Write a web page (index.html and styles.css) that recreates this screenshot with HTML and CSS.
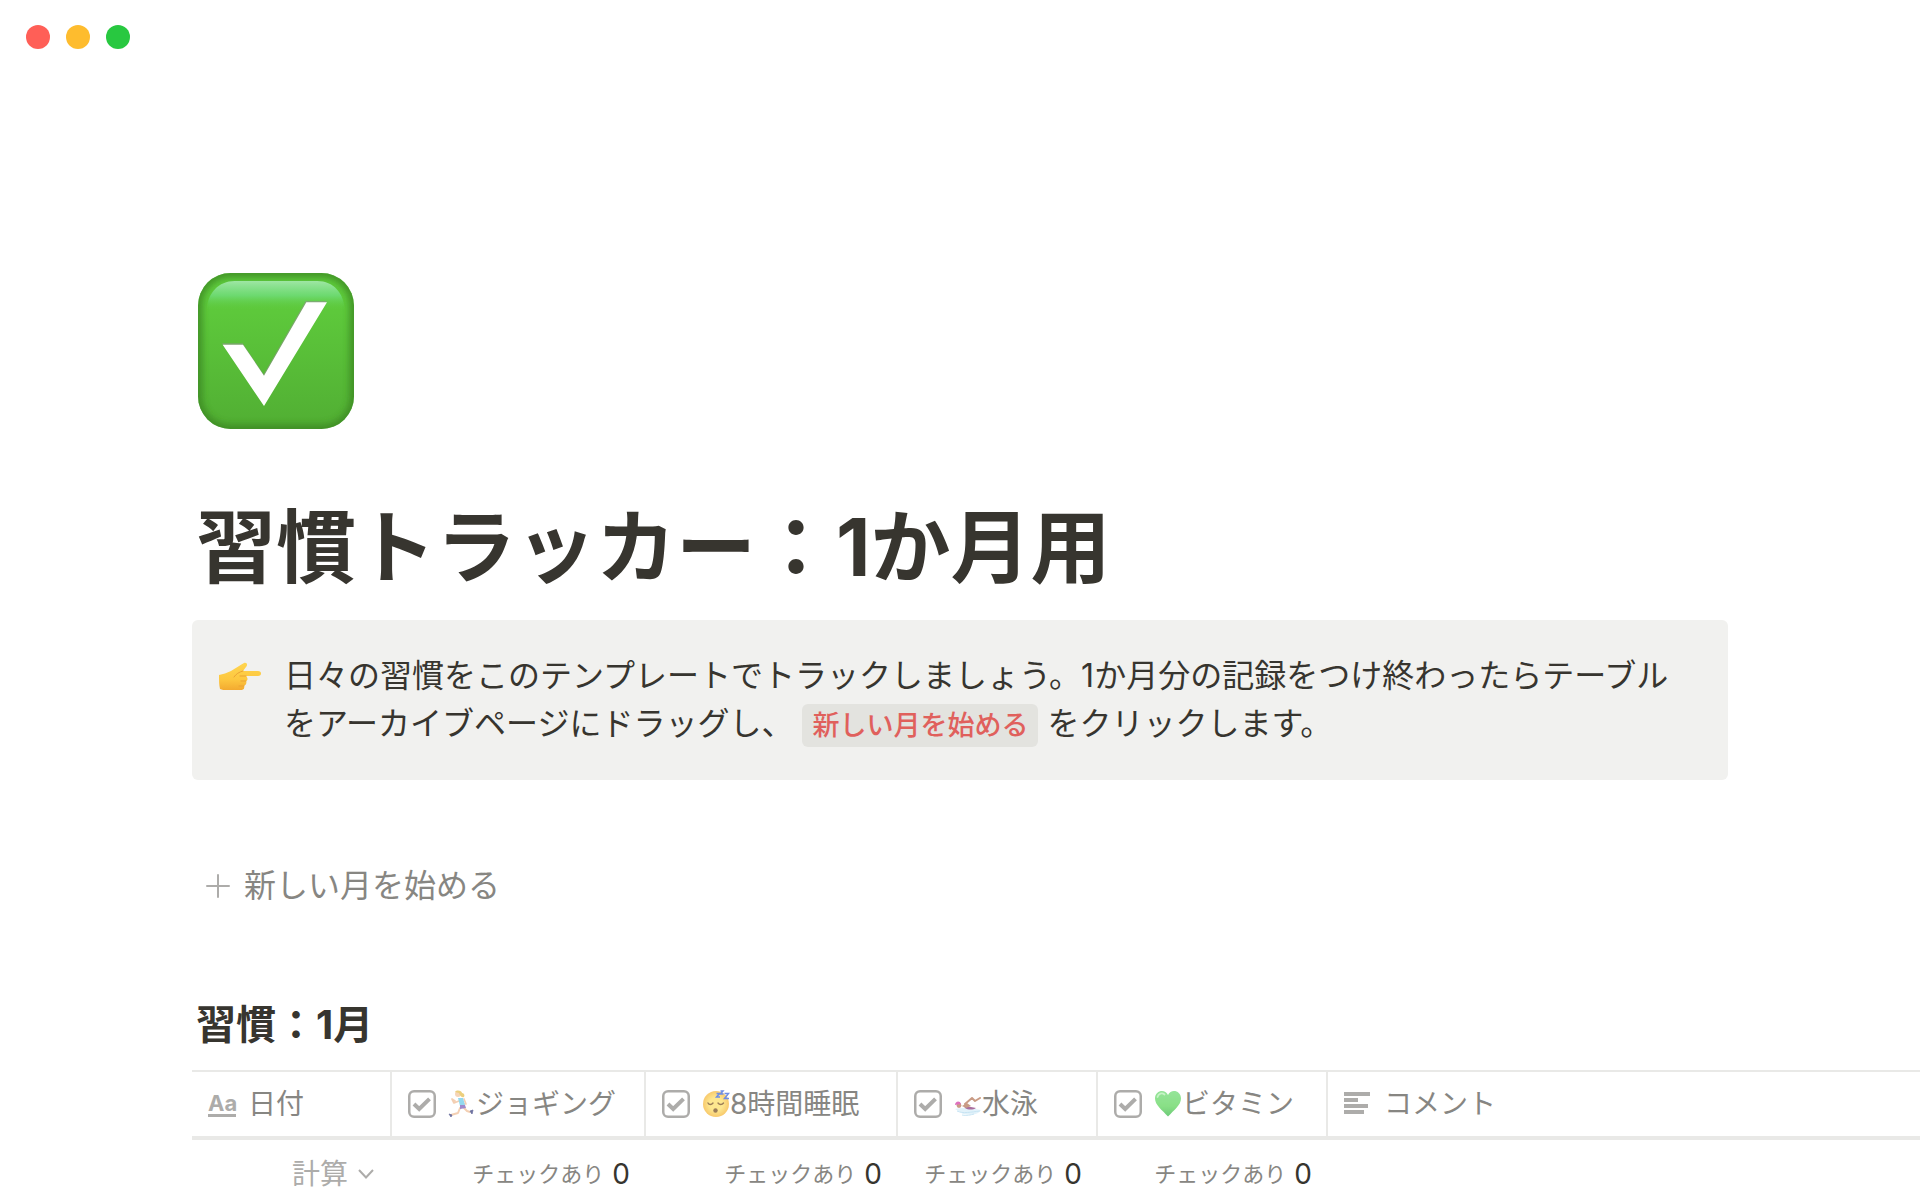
FILE: index.html
```html
<!DOCTYPE html>
<html lang="ja">
<head>
<meta charset="utf-8">
<meta name="viewport" content="width=device-width, initial-scale=1">
<title>習慣トラッカー：1か月用</title>
<link rel="stylesheet" href="styles.css">
</head>
<body>
<svg class="defs" width="0" height="0" aria-hidden="true">
  <symbol id="icon-checkbox" viewBox="0 0 28 28">
    <rect x="1.25" y="1.25" width="25.5" height="25.5" rx="4.8" fill="none" stroke="currentColor" stroke-width="2.5"/>
    <path d="M6 14l5.200 5L21.500 8.800" fill="none" stroke="currentColor" stroke-width="4"/>
  </symbol>
</svg>

<header class="titlebar">
  <button class="dot dot-close" type="button" aria-label="閉じる"></button>
  <button class="dot dot-min" type="button" aria-label="しまう"></button>
  <button class="dot dot-max" type="button" aria-label="拡大"></button>
</header>

<main>
  <div class="page">
    <svg class="page-icon" viewBox="0 0 468 468" role="img" aria-label="チェック">
      <defs>
        <linearGradient id="green" x1="0" y1="0" x2="0" y2="1">
          <stop offset="0" stop-color="#5ecb3c"/><stop offset=".25" stop-color="#5dc83b"/><stop offset="1" stop-color="#51ae33"/>
        </linearGradient>
        <linearGradient id="gloss" x1="0" y1="0" x2="0" y2="1">
          <stop offset="0" stop-color="#9ee6a4"/><stop offset=".5" stop-color="#6fdc78" stop-opacity=".85"/><stop offset="1" stop-color="#5ecb3c" stop-opacity="0"/>
        </linearGradient>
        <filter id="soft" x="-20%" y="-20%" width="140%" height="140%"><feGaussianBlur stdDeviation="9"/></filter>
        <clipPath id="tile"><rect width="468" height="468" rx="98"/></clipPath>
      </defs>
      <g clip-path="url(#tile)">
        <rect width="468" height="468" fill="url(#green)"/>
        <rect x="-2" y="-2" width="472" height="472" rx="98" fill="none" stroke="#3a8524" stroke-width="32" filter="url(#soft)" opacity=".75"/>
        <path d="M26 112C28 60 62 24 110 24H358C406 24 438 60 440 112Z" fill="url(#gloss)"/>
      </g>
      <path d="M72 211H134L197 304L323 84H386L197 394Z" fill="#8f938c" opacity=".6"/>
      <path d="M74 215H135L198 308L325 88H387L198 399Z" fill="#fff"/>
    </svg>

    <h1 class="page-title">習慣トラッカー：1か月用</h1>

    <aside class="callout">
      <svg class="callout-icon" viewBox="0 0 44 30" aria-hidden="true">
        <defs>
          <linearGradient id="skin" x1="0" y1="0" x2="0" y2="1">
            <stop offset="0" stop-color="#ffd54f"/><stop offset=".6" stop-color="#fdc840"/><stop offset="1" stop-color="#f3aa30"/>
          </linearGradient>
        </defs>
        <path d="M1 13C5 12 9 11 13 9C18 6 22 3 26 1C29 0 30 3 28 5L25 9H40C44 9 44 14 40 14H28C30 16 30 18 28 19C29 21 28 23 26 24C27 27 25 28 22 28H10C6 28 4 28 2 27C1 23 1 18 1 13Z" fill="url(#skin)"/>
        <path d="M25 9C21 10 18 12 16 15M28 14H22M28 19H23M26 24H21" fill="none" stroke="#eba235" stroke-width="1" stroke-linecap="round"/>
      </svg>
      <p class="callout-text">日々の習慣をこのテンプレートでトラックしましょう。1か月分の記録をつけ終わったらテーブルをアーカイブページにドラッグし、 <code>新しい月を始める</code> をクリックします。</p>
    </aside>

    <button class="new-month" type="button">
      <svg class="plus" viewBox="0 0 24 24" aria-hidden="true"><path d="M12 1V23M1 12H23" stroke="currentColor" stroke-width="2" stroke-linecap="round"/></svg>
      <span>新しい月を始める</span>
    </button>

    <h2 class="section-title">習慣：1月</h2>
  </div>

  <div class="database">
    <table>
      <colgroup>
        <col class="col-date"><col class="col-jog"><col class="col-sleep"><col class="col-swim"><col class="col-vitamin"><col>
      </colgroup>
      <thead>
        <tr>
          <th scope="col"><div class="head">
            <span class="aa" aria-hidden="true">Aa</span>
            <span>日付</span></div></th>
          <th scope="col"><div class="head">
            <svg class="type-icon" aria-hidden="true"><use href="#icon-checkbox"/></svg>
            <span class="label"><svg class="emoji" viewBox="0 0 28 28" aria-hidden="true">
              <path d="M7 11L4 9L6 13L11 11M16 9L18 14L16 14" fill="none" stroke="#f0c09a" stroke-width="1.700" stroke-linecap="round" stroke-linejoin="round"/>
              <path d="M12 18L10 23L3 25M16 18L19 21L22 22" fill="none" stroke="#f0c09a" stroke-width="2" stroke-linecap="round" stroke-linejoin="round"/>
              <path d="M10 8L15 8L17 15L12 16Z" fill="#6fcdea"/>
              <path d="M12 15L17 15L18 18L12 19Z" fill="#7f63ba"/>
              <circle cx="10" cy="4" r="3" fill="#f3c7a0"/>
              <path d="M7 2C9 -1 14 1 14 3C16 3 17 5 16 7C14 8 12 6 11 3Z" fill="#e6c052"/>
              <path d="M1 24L4 25L3 27ZM22 21L25 20L24 24Z" fill="#3b4180" stroke="#3b4180" stroke-width=".8"/>
            </svg>ジョギング</span></div></th>
          <th scope="col"><div class="head">
            <svg class="type-icon" aria-hidden="true"><use href="#icon-checkbox"/></svg>
            <span class="label"><svg class="emoji" viewBox="0 0 28 28" aria-hidden="true">
              <defs><radialGradient id="face"><stop offset=".5" stop-color="#fde06a"/><stop offset="1" stop-color="#f6b83d"/></radialGradient></defs>
              <circle cx="14" cy="14" r="13" fill="url(#face)"/>
              <path d="M6 13C7 15 9.500 15 11 13M16 13C17.500 15 20 15 21.500 13" fill="none" stroke="#7b5220" stroke-width="1.400" stroke-linecap="round"/>
              <ellipse cx="13.500" cy="20.500" rx="2.200" ry="2.300" fill="#7b5220"/>
              <path d="M14.500 3.500H17.500L14.500 7H18M18.500 1H21L18.500 4H21.500M22.500 3.500H26.500L22.500 8.500H27" fill="none" stroke="#3f69dc" stroke-width="1.500"/>
            </svg>8時間睡眠</span></div></th>
          <th scope="col"><div class="head">
            <svg class="type-icon" aria-hidden="true"><use href="#icon-checkbox"/></svg>
            <span class="label"><svg class="emoji" viewBox="0 0 28 28" aria-hidden="true">
              <path d="M1 19C8 17 19 18 27 20C25 24 18 26 9 24Z" fill="#d9eef9"/>
              <path d="M10 16L17 17L22 18C19 20 14 20 11 18Z" fill="#8d3f80"/>
              <path d="M11 14L18 8L21 11L26 8" fill="none" stroke="#b87a5d" stroke-width="2" stroke-linecap="round" stroke-linejoin="round"/>
              <path d="M8 16L13 13L17 16L12 18Z" fill="#b87a5d"/>
              <circle cx="5" cy="15.500" r="2.400" fill="#b87a5d"/>
              <path d="M1 15C1 11 6 10 7 14Z" fill="#d43fa8"/>
              <path d="M3 21C9 24 17 22 26 21M8 25C12 26 17 25 20 24" fill="none" stroke="#b5dcf0"/>
            </svg>水泳</span></div></th>
          <th scope="col"><div class="head">
            <svg class="type-icon" aria-hidden="true"><use href="#icon-checkbox"/></svg>
            <span class="label"><svg class="emoji" viewBox="0 0 28 28" aria-hidden="true">
              <defs><linearGradient id="heart" x1="0" y1="0" x2="0" y2="1"><stop offset="0" stop-color="#72dc78"/><stop offset=".6" stop-color="#62d55e"/><stop offset="1" stop-color="#3db94d"/></linearGradient></defs>
              <path d="M14 26.500C8 20 1 15 1 8.500C1 .5 11-1.500 14 5C17-1.500 27 .5 27 8.500C27 15 20 20 14 26.500Z" fill="url(#heart)"/>
              <path d="M3.500 7C4.500 3.500 8 2.500 10.500 4.500" fill="none" stroke="#b5efb5" stroke-width="1.800" stroke-linecap="round"/>
            </svg>ビタミン</span></div></th>
          <th scope="col"><div class="head">
            <svg class="type-icon" viewBox="0 0 28 28" aria-hidden="true"><path d="M0 2H26V6H0ZM0 8H14V12H0ZM0 14H24V18H0ZM0 20H20V24H0Z" fill="currentColor"/></svg>
            <span>コメント</span></div></th>
        </tr>
      </thead>
      <tfoot>
        <tr>
          <td><button class="calc" type="button">計算<svg class="chevron" viewBox="0 0 16 10" aria-hidden="true"><path d="M1 1L8 8.500L15 1" fill="none" stroke="currentColor" stroke-width="2"/></svg></button></td>
          <td><div class="sum"><span>チェックあり</span><b>0</b></div></td>
          <td><div class="sum"><span>チェックあり</span><b>0</b></div></td>
          <td><div class="sum"><span>チェックあり</span><b>0</b></div></td>
          <td><div class="sum"><span>チェックあり</span><b>0</b></div></td>
          <td></td>
        </tr>
      </tfoot>
    </table>
  </div>
</main>
</body>
</html>
```
FILE: styles.css
```css
:root {
  --ink: #37352f;
  --muted: #878682;
  --faint: #adacaa;
  --line: #e9e9e7;
  --gutter: 10%;
}

* { box-sizing: border-box; }

body {
  margin: 0;
  background: #fff;
  color: var(--ink);
  font-family: Inter, "Noto Sans CJK JP", sans-serif;
  font-size: 32px;
  line-height: 48px;
  overflow-x: hidden;
}

button {
  border: 0;
  padding: 0;
  background: none;
  font: inherit;
  cursor: pointer;
}

svg { display: block; flex: none; }
.defs { position: absolute; }

.titlebar {
  display: flex;
  gap: 16px;
  padding: 25px 26px;
}
.dot { width: 24px; height: 24px; border-radius: 50%; }
.dot-close { background: #ff5f57; }
.dot-min { background: #febc2e; }
.dot-max { background: #28c840; }

.page { padding: 0 var(--gutter); }
.page-icon {
  width: 156px;
  height: 156px;
  margin: 199px 6px 0;
}

.page-title {
  margin: 70px 4px 25px;
  font-size: 80px;
  line-height: 96px;
  font-weight: 700;
}

.callout {
  display: flex;
  gap: 22px;
  padding: 32px 48px 32px 26px;
  border-radius: 6px;
  background: #f1f1ef;
}
.callout-icon { width: 44px; height: 30px; margin-top: 10px; }
.callout-text { margin: 0; flex: 1; }
.callout code {
  padding: 5px 10px;
  border-radius: 6px;
  background: #e3e3df;
  color: #e0605c;
  font-family: inherit;
  font-size: 27px;
  line-height: 32px;
  font-weight: 500;
}

.new-month {
  display: flex;
  align-items: center;
  gap: 14px;
  margin: 82px 14px 0;
  color: var(--muted);
}
.plus { width: 24px; height: 24px; color: var(--faint); }

.section-title {
  margin: 90px 4px 20px;
  font-size: 40px;
  line-height: 50px;
  font-weight: 700;
}

.database { padding-left: var(--gutter); }
table {
  width: 100%;
  table-layout: fixed;
  border-spacing: 0;
  border-top: 2px solid var(--line);
  font-size: 28px;
}
.col-date, .col-swim { width: 200px; }
.col-jog { width: 254px; }
.col-sleep { width: 252px; }
.col-vitamin { width: 230px; }

th {
  height: 68px;
  padding: 0 16px;
  border-right: 2px solid var(--line);
  border-bottom: 4px solid var(--line);
  color: var(--muted);
  font-weight: 400;
  white-space: nowrap;
}
th:last-child { border-right: 0; }
.head { display: flex; align-items: center; gap: 12px; line-height: 40px; }
.type-icon { width: 28px; height: 28px; color: var(--faint); }
.aa {
  width: 28px;
  border-bottom: 3px solid currentColor;
  color: var(--faint);
  font-size: 22px;
  line-height: 22px;
  font-weight: 700;
  text-align: center;
}
.label { display: flex; align-items: center; }
.emoji { width: 28px; height: 28px; opacity: .75; }

td { height: 68px; padding: 0 16px; }
.calc {
  display: flex;
  align-items: center;
  gap: 10px;
  margin: 0 2px 0 auto;
  color: var(--faint);
}
.chevron { width: 16px; height: 10px; }
.sum {
  display: flex;
  justify-content: flex-end;
  align-items: center;
  gap: 8px;
  white-space: nowrap;
}
.sum span { font-size: 22px; color: var(--muted); }
.sum b { font-weight: 400; }
```
